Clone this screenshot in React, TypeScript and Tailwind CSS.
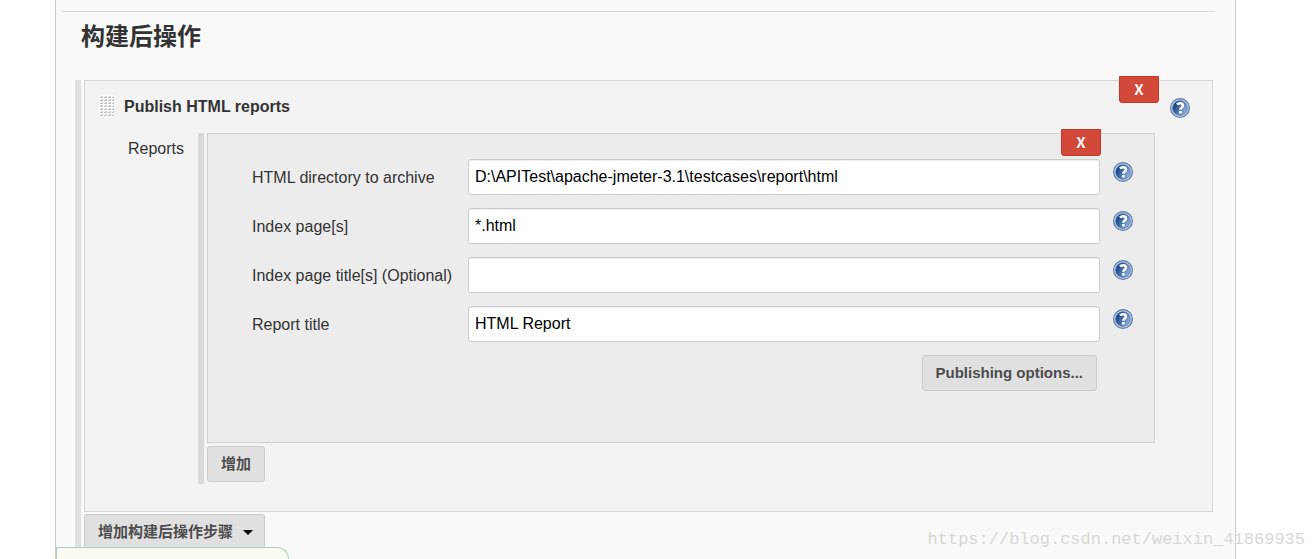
import type { ReactNode } from "react";

const fields = [
  { id: "reportDir", label: "HTML directory to archive", value: "D:\\APITest\\apache-jmeter-3.1\\testcases\\report\\html" },
  { id: "reportFiles", label: "Index page[s]", value: "*.html" },
  { id: "reportTitles", label: "Index page title[s] (Optional)", value: "" },
  { id: "reportName", label: "Report title", value: "HTML Report" },
];

function HelpButton({ topic }: { topic: string }) {
  return (
    <button type="button" aria-label={`Help: ${topic}`} className="block size-5 shrink-0">
      <svg viewBox="0 0 20 20" className="size-5">
        <defs>
          <linearGradient id="helpDisc" x1="0" y1="0.3" x2="1" y2="0.8">
            <stop offset="0.15" stopColor="#1f4b8c" />
            <stop offset="0.95" stopColor="#94b6e0" />
          </linearGradient>
        </defs>
        <circle cx="10" cy="10" r="9.4" fill="#bccde3" stroke="#5c7dac" strokeWidth="1.2" />
        <circle cx="10" cy="10" r="7.3" fill="url(#helpDisc)" stroke="#3f669f" strokeWidth="0.6" />
        <path
          d="M6.9 6.4C7.8 5.6 8.9 5.2 10 5.2c1.9 0 2.9.9 2.9 2.2 0 1.1-.6 1.7-1.4 2.3-.8.6-1.1.9-1.1 2"
          fill="none"
          stroke="#fff"
          strokeWidth="2.5"
        />
        <rect x="9" y="12.9" width="2.7" height="2.5" rx="0.5" fill="#fff" />
      </svg>
    </button>
  );
}

function DragHandle() {
  const rows = [0, 1, 2, 3, 4, 5, 6];
  const cols = [0, 1, 2, 3];
  return (
    <svg viewBox="0 0 15 22" className="h-[22px] w-[15px] shrink-0" aria-hidden="true">
      <rect width="15" height="22" fill="#fafafa" />
      {rows.map((r) =>
        cols.map((c) => (
          <g key={`${r}-${c}`}>
            <rect x={1 + c * 4} y={2 + r * 3} width="3" height="1" fill="#c4c4c4" />
            <rect x={2 + c * 4} y={1 + r * 3} width="2" height="1" fill="#d2d2d2" />
          </g>
        )),
      )}
    </svg>
  );
}

function DeleteButton({ label }: { label: string }) {
  return (
    <button
      type="button"
      aria-label={label}
      className="absolute -top-[5px] right-[53px] flex h-[27px] w-10 items-center justify-center rounded-b-[3px] border border-[#c4392b] bg-[#d24939] font-['Noto_Sans_CJK_SC',sans-serif] text-[15px] font-bold text-[#f5f5f5]"
    >
      X
    </button>
  );
}

function GrayButton({ children }: { children: ReactNode }) {
  return (
    <button
      type="button"
      className="flex h-9 items-center rounded-[3px] border border-[#cccccc] bg-[#e0e0e0] px-[13px] text-[15px] font-bold text-[#4d4d4d]"
    >
      {children}
    </button>
  );
}

export default function App() {
  return (
    <div className="relative min-h-screen overflow-hidden bg-white font-['Liberation_Sans','Noto_Sans_CJK_SC',sans-serif] text-base text-[#333333]">
      <main className="mr-20 ml-[55px] min-h-screen border-x border-[#cccccc] bg-[#f9f9f9] pt-[11px]">
        <hr className="mr-5 ml-1.5 border-[#dddddd]" />
        <h2 className="mt-2 ml-[25px] text-2xl leading-[34px] font-bold">构建后操作</h2>

        <section className="mt-[26px] mr-[22px] ml-[19px] border-l-[6px] border-[#e0e0e0] pb-px pl-[3px]">
          <div className="relative border border-[#d6d6d6] bg-[#f3f3f3] pt-3.5 pb-[27px]">
            <DeleteButton label="Delete Publish HTML reports" />
            <div className="mr-[22px] ml-3.5 flex items-start">
              <DragHandle />
              <h3 className="ml-2.5 leading-6 font-bold">Publish HTML reports</h3>
              <div className="mt-[3px] ml-auto">
                <HelpButton topic="Publish HTML reports" />
              </div>
            </div>

            <div className="mt-3.5 mr-[57px] ml-[43px] flex">
              <div className="w-[70px] shrink-0 pt-1 leading-6">Reports</div>
              <div className="min-w-0 flex-1 border-l-[6px] border-[#d9d9d9] pb-0.5 pl-[3px]">
                <div className="relative mb-[3px] border border-[#d2d2d2] bg-[#ececec] pt-[25px] pr-[21px] pb-[51px] pl-11">
                  <DeleteButton label="Delete report" />
                  <div className="flex flex-col gap-[13px]">
                    {fields.map((f) => (
                      <div key={f.id} className="flex h-9 items-start">
                        <label htmlFor={f.id} className="w-[216px] shrink-0 leading-[38px]">
                          {f.label}
                        </label>
                        <input
                          id={f.id}
                          type="text"
                          defaultValue={f.value}
                          className="h-9 min-w-0 flex-1 rounded-[3px] border border-[#cccccc] bg-white px-1.5 text-black shadow-[inset_0_1px_1px_rgba(0,0,0,0.075)]"
                        />
                        <div className="mt-[3px] ml-[13px]">
                          <HelpButton topic={f.label} />
                        </div>
                      </div>
                    ))}
                    <div className="mr-9 flex justify-end">
                      <GrayButton>Publishing options...</GrayButton>
                    </div>
                  </div>
                </div>
                <GrayButton>增加</GrayButton>
              </div>
            </div>
          </div>
          <div className="mt-0.5">
            <GrayButton>
              增加构建后操作步骤
              <svg viewBox="0 0 10 5" className="ml-2.5 -mr-0.5 h-[5px] w-2.5" aria-hidden="true">
                <path d="M0 0h10L5 5z" fill="#000" />
              </svg>
            </GrayButton>
          </div>
        </section>
      </main>

      <div className="absolute bottom-0 left-14 h-3 w-[233px] rounded-tr-xl border-t border-r border-l border-[#a9cfbc] bg-[#f8f9f0]/90" />
      <p className="absolute right-[11px] bottom-[7px] font-['Liberation_Mono',monospace] text-[17px] leading-6 text-[#d8d8d4]">
        https://blog.csdn.net/weixin_41869935
      </p>
    </div>
  );
}
